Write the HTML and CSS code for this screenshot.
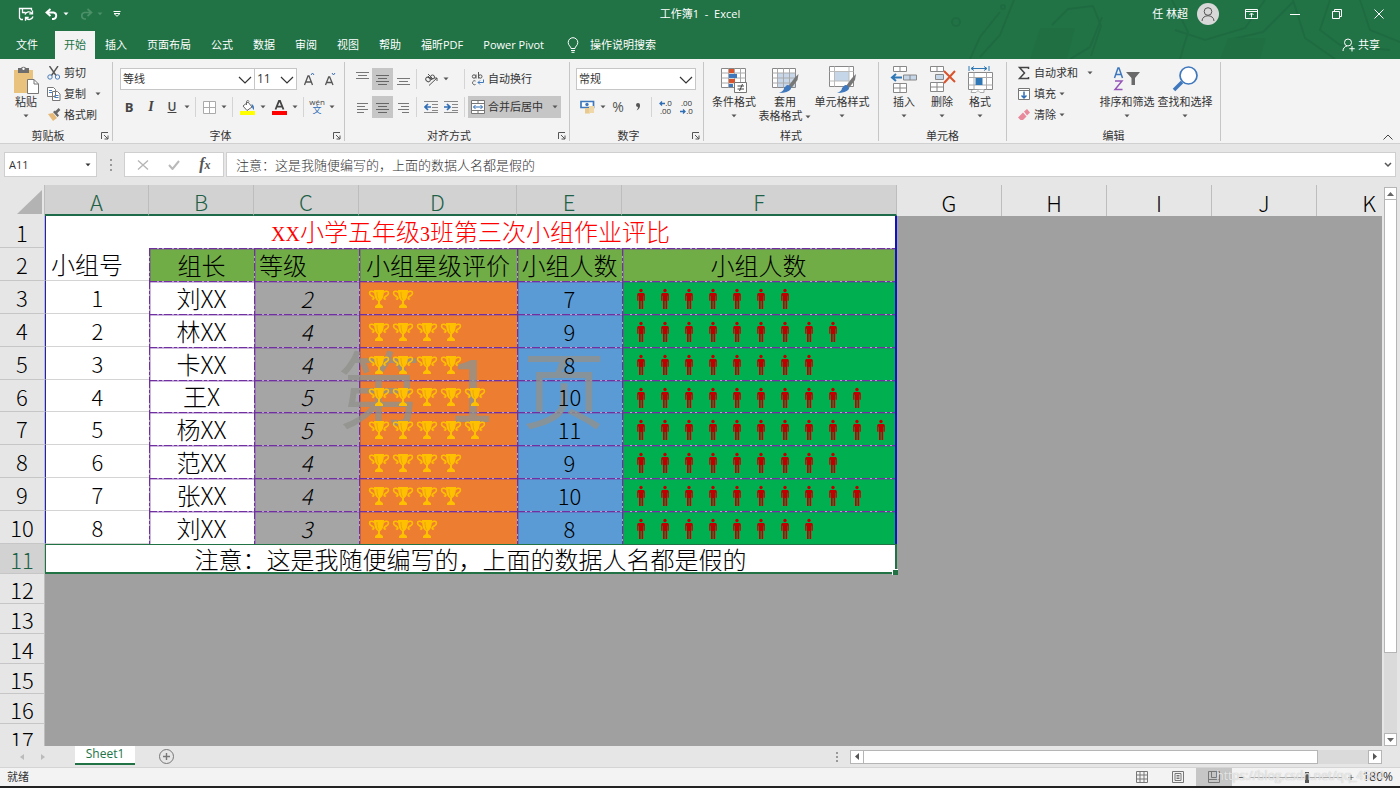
FILE: index.html
```html
<!DOCTYPE html>
<html lang="zh-CN">
<head>
<meta charset="utf-8">
<title>工作簿1 - Excel</title>
<link rel="stylesheet" href="styles.css">
</head>
<body>
<svg class="defs" aria-hidden="true">
  <defs>
    <pattern id="trophies" width="24" height="20" patternUnits="userSpaceOnUse">
      <g fill="#ffc000">
        <path d="M7 1h10c0 6-1.500 10-4 11v2.500c0 1 2.500 1.500 3 3V19H8v-1.500c.5-1.500 3-2 3-3V12c-2.500-1-4-5-4-11z"/>
        <path d="M7.500 3.500C5 1.500 2.500 2 2.500 4.200c0 2.300 3.200 2.800 4.200 4.300.7 1.500-1 2-1.500 1M16.500 3.500c2.500-2 5-1.500 5 .7 0 2.300-3.200 2.800-4.200 4.300-.7 1.500 1 2 1.500 1" fill="none" stroke="#ffc000" stroke-width="1.600"/>
      </g>
      <path d="M10 3c0 4 .5 6 1.500 8" fill="none" stroke="#e39a10" stroke-width=".8"/>
    </pattern>
    <pattern id="people" width="24" height="22" patternUnits="userSpaceOnUse">
      <g fill="#c00000">
        <circle cx="12" cy="2.500" r="1.700"/>
        <path d="M9.500 5h5q1.300 0 1.300 1.500v6.300h-1.200v-5h-.4V21h-1.700v-8h-.8v8H10V7.800h-.5v5H8.200V6.500Q8.200 5 9.500 5z"/>
      </g>
    </pattern>
    <symbol id="arrow" viewBox="0 0 6 4"><path d="M.5.5h5L3 3.300z" fill="currentColor"/></symbol>
    <symbol id="chevron" viewBox="0 0 14 8"><path d="M1 1l6 6 6-6" fill="none" stroke="#333" stroke-width="1.200"/></symbol>
    <symbol id="launch" viewBox="0 0 8 8"><path d="M.5 7V.5H7M3 3l4 4M7 3.500V7H3.500" fill="none" stroke="#555"/></symbol>
  </defs>
</svg>
<div class="app">
  <header class="top">
    <svg class="circuit" viewBox="0 0 460 59" aria-hidden="true">
      <g fill="none" stroke="#1a5f39" stroke-width="2">
        <path d="M30 59l10-22 20-25M74 0l-14 35-20 22M112 25l16-16 25-3 8 20-10 30M130 59l20-12 12-30M232 0l16 32-8 27M235 30l30 10 40-12 20-28M288 40l35-8 30-30M353 0l12 38 30 21M390 0l-10 30 20 15 50 5M420 0l10 30 30 12"/>
        <circle cx="16" cy="22" r="4"/><circle cx="63" cy="7" r="2"/>
      </g>
      <path d="M100 28h35l-8 31H90zM288 38h38l-6 21h-40z" fill="#1e6a40"/>
    </svg>
    <div class="titlebar">
      <div class="qat">
        <button class="q-save" aria-label="保存"><svg width="16" height="14" viewBox="0 0 16 14" fill="none" stroke="#fff" stroke-width="1.300"><path d="M5 12.500H3L1.500 11V1.500h12v2M4.500 1.500v4h3M7 7.500a4 4 0 0 1 7-1M14.500 3.500v3.300h-3.300M15 9.500a4 4 0 0 1-7 1.500M7.500 13.800v-3.300h3.200"/></svg></button>
        <button class="q-undo" aria-label="撤消"><svg width="14" height="12" viewBox="0 0 14 12" fill="none" stroke="#fff" stroke-width="1.900"><path d="M5.500 1L1.500 4.500l4 3.500M2 4.500h6.500a3.300 3.300 0 0 1 0 6.500H7"/></svg></button>
        <svg class="arr" width="6" height="4"><use href="#arrow"/></svg>
        <button class="q-redo" aria-label="恢复"><svg width="14" height="12" viewBox="0 0 14 12" fill="none" stroke="#4b9068" stroke-width="1.700"><path d="M8.500 1l4 3.500-4 3.500M12 4.500H5.500a3.300 3.300 0 0 0 0 6.500H7"/></svg></button>
        <svg class="arr dim" width="6" height="4"><use href="#arrow"/></svg>
        <button class="q-more" aria-label="自定义"><svg width="8" height="6" viewBox="0 0 8 6" fill="none" stroke="#fff"><path d="M.5.500h7M1 2.500h6L4 5.300z"/></svg></button>
      </div>
      <div class="doc-title">工作簿1&nbsp; -&nbsp; Excel</div>
      <div class="win">
        <span>任 林超</span>
        <svg class="avatar" width="22" height="22" viewBox="0 0 22 22"><circle cx="11" cy="11" r="11" fill="#d8d8d8"/><g fill="none" stroke="#555"><circle cx="11" cy="8.500" r="3.800"/><path d="M5 18c0-7 12-7 12 0"/></g></svg>
        <button aria-label="功能区显示选项"><svg width="13" height="10" viewBox="0 0 13 10" fill="none" stroke="#fff"><path d="M.5.500h12v9H.5zM.5 2.500h12M6.500 8.500V4.500M4.500 6l2-2 2 2"/></svg></button>
        <button aria-label="最小化"><svg width="10" height="10" viewBox="0 0 10 10" stroke="#fff"><path d="M0 5.500h10"/></svg></button>
        <button aria-label="还原"><svg width="10" height="10" viewBox="0 0 10 10" fill="none" stroke="#fff"><path d="M.5 2.500h7v7h-7zM2.500 2V.5h7v7H8"/></svg></button>
        <button aria-label="关闭"><svg width="10" height="10" viewBox="0 0 10 10" stroke="#fff"><path d="M.5.500l9 9M9.500.5l-9 9"/></svg></button>
      </div>
    </div>
    <nav class="tabs">
      <button class="file">文件</button><button class="active">开始</button><button>插入</button><button>页面布局</button><button>公式</button><button>数据</button><button>审阅</button><button>视图</button><button>帮助</button><button>福昕PDF</button><button>Power Pivot</button>
      <button class="tell"><svg width="12" height="16" viewBox="0 0 12 16" fill="none" stroke="#fff"><path d="M4 11.500c0-2-2.800-3-2.800-6a4.800 4.800 0 0 1 9.600 0c0 3-2.800 4-2.800 6zM4 13.500h4M4.500 15.300h3"/></svg>操作说明搜索</button>
      <button class="share"><svg width="13" height="14" viewBox="0 0 13 14" fill="none" stroke="#fff"><circle cx="6" cy="4.500" r="3.500"/><path d="M1 13c0-2.500 1.500-4.500 4-5M10 8v5.500M7.300 10.700h5.400"/></svg>共享</button>
    </nav>
  </header>

  <section class="ribbon">
    <div class="group g-clip">
      <div class="body">
        <button class="big"><svg width="26" height="28" viewBox="0 0 26 28"><path d="M1 4h19v23H1z" fill="#e9c37d"/><path d="M5 2h3a3 3 0 0 1 5 0h3v5H5z" fill="#6d6d6d"/><circle cx="10.500" cy="2.800" r="1.200" fill="#fff"/><path d="M14.500 13.500h6.500l4.500 4.500v9.500h-11z" fill="#fff" stroke="#777"/><path d="M21 13.500V18h4.500" fill="none" stroke="#777"/></svg><span>粘贴</span><svg class="arr" width="6" height="4"><use href="#arrow"/></svg></button>
        <div class="stack">
          <button><svg width="14" height="14" viewBox="0 0 14 14" fill="none"><path d="M2.500 0L9 9.500M11 0L4.500 9.500" stroke="#555" stroke-width="1.400"/><circle cx="3" cy="11" r="2.200" stroke="#4a7ebb"/><circle cx="10.500" cy="11" r="2.200" stroke="#4a7ebb"/></svg>剪切</button>
          <button><svg width="14" height="14" viewBox="0 0 14 14" fill="#fff" stroke="#777"><path d="M.5.500h6l2 2v7h-8zM5.500 4.500h5l2.500 2.500v6.500H5.500z"/><path d="M2 3.500h3M2 5.500h3M7.500 8.500h4M7.500 10.500h4" stroke="#4a7ebb"/></svg>复制<svg class="arr far" width="6" height="4"><use href="#arrow"/></svg></button>
          <button><svg width="14" height="14" viewBox="0 0 14 14"><path d="M1 6l5-1 4 5-4 3z" fill="#e5b978"/><path d="M6 4l2-1.500 4 5L10.500 9z" fill="#666"/><path d="M9 4.500L12.500 1" stroke="#666" stroke-width="2.500"/></svg>格式刷</button>
        </div>
      </div>
      <div class="label">剪贴板<button aria-label="剪贴板选项"><svg width="8" height="8"><use href="#launch"/></svg></button></div>
    </div>

    <div class="group g-font">
      <div class="body rows">
        <div class="row">
          <label class="combo c-font"><select aria-label="字体"><option>等线</option></select><svg width="14" height="8"><use href="#chevron"/></svg></label><label class="combo c-size"><select aria-label="字号"><option>11</option></select><svg width="14" height="8"><use href="#chevron"/></svg></label>
          <button class="w22 grow" aria-label="增大字号"><svg width="14" height="14" viewBox="0 0 14 14" fill="none"><path d="M1.500 13L5 4h1l3.500 9M2.800 10h5.400" stroke="#555" stroke-width="1.300"/><path d="M8 3l1.500-2L11 3" stroke="#3f6fb5"/></svg></button>
          <button class="w20" aria-label="减小字号"><svg width="14" height="14" viewBox="0 0 14 14" fill="none"><path d="M1.500 13L4.700 5h1L9 13M2.800 10.500h5" stroke="#555" stroke-width="1.300"/><path d="M8 1l1.500 2L11 1" stroke="#3f6fb5"/></svg></button>
        </div>
        <div class="row fmt">
          <button class="w22"><b>B</b></button><button class="w22"><i>I</i></button><button class="w20"><u>U</u></button><svg class="arr" width="6" height="4"><use href="#arrow"/></svg><span class="vs"></span>
          <button class="w20" aria-label="边框"><svg width="13" height="13" viewBox="0 0 13 13" fill="#fff" stroke="#aaa"><path d="M.5.500h12v12H.5zM6.500.500v12M.5 6.500h12"/></svg></button><svg class="arr" width="6" height="4"><use href="#arrow"/></svg><span class="vs"></span>
          <button class="w22" aria-label="填充颜色"><svg width="15" height="15" viewBox="0 0 15 15"><path d="M0 11h15v4H0z" fill="#ff0"/><path d="M3 6l5-4 4 5-5 3.500z" fill="#fff" stroke="#666"/><path d="M6.500 5V1.500a1.300 1.300 0 0 1 2.500 0" fill="none" stroke="#666"/><path d="M11.500 4q3 1 2.500 6-2-1-2.500-6z" fill="#3f78bd"/></svg></button><svg class="arr" width="6" height="4"><use href="#arrow"/></svg>
          <button class="w22" aria-label="字体颜色"><svg width="15" height="15" viewBox="0 0 15 15"><path d="M0 11h15v4H0z" fill="red"/><path d="M3.500 9.500L7 1h1l3.500 8.500M4.800 6.700h5.400" fill="none" stroke="#444" stroke-width="1.800"/></svg></button><svg class="arr" width="6" height="4"><use href="#arrow"/></svg><span class="vs"></span>
          <button class="w20 pinyin"><span>wén</span><span class="blue">文</span></button><svg class="arr" width="6" height="4"><use href="#arrow"/></svg>
        </div>
      </div>
      <div class="label">字体<button aria-label="字体选项"><svg width="8" height="8"><use href="#launch"/></svg></button></div>
    </div>

    <div class="group g-align">
      <div class="body rows">
        <div class="row">
          <button class="w20 hi" aria-label="顶端对齐"><svg width="13" height="8" viewBox="0 0 13 8" stroke="#777"><path d="M0 .500h13M2 3.500h9M0 6.500h13"/></svg></button><button class="w21 on" aria-label="垂直居中"><svg width="13" height="11" viewBox="0 0 13 11" stroke="#666"><path d="M0 1.500h13M2 4.500h9M0 7.500h13M2 10.500h9"/></svg></button><button class="w20 lo" aria-label="底端对齐"><svg width="13" height="10" viewBox="0 0 13 10" stroke="#777"><path d="M0 2.500h13M2 5.500h9M0 8.500h13"/></svg></button><span class="vs"></span>
          <button class="w21" aria-label="方向"><svg width="14" height="14" viewBox="0 0 14 14" fill="none" stroke="#555"><ellipse cx="4" cy="7.500" rx="2" ry="2.500" transform="rotate(-45 4 7.500)"/><path d="M4 4l4 4M4 2l5 5"/><circle cx="8.500" cy="5" r="2"/><path d="M5 13.500L13 6M13 9V6h-3"/></svg></button><svg class="arr" width="6" height="4"><use href="#arrow"/></svg><span class="gap10"></span><span class="vs"></span>
          <button class="wide"><svg width="14" height="14" viewBox="0 0 14 14" fill="none" stroke="#555"><circle cx="3" cy="4.500" r="1.700"/><path d="M5 2.500v4M7.500 0v6.500M4.500 9a2 2 0 1 0 0 3.500"/><circle cx="9.300" cy="4.500" r="1.700"/><path d="M12.500 7.500v3H7M9 8.500l-2 2 2 2" stroke="#3f78bd"/></svg>自动换行</button>
        </div>
        <div class="row">
          <button class="w20" aria-label="左对齐"><svg width="11" height="11" viewBox="0 0 11 11" stroke="#777"><path d="M0 1.500h11M0 4.500h8M0 7.500h11M0 10.500h7"/></svg></button><button class="w21 on" aria-label="居中"><svg width="13" height="11" viewBox="0 0 13 11" stroke="#666"><path d="M0 1.500h13M2 4.500h9M0 7.500h13M2 10.500h9"/></svg></button><button class="w20" aria-label="右对齐"><svg width="11" height="11" viewBox="0 0 11 11" stroke="#777"><path d="M0 1.500h11M3 4.500h8M0 7.500h11M4 10.500h7"/></svg></button><span class="vs"></span>
          <button class="w21" aria-label="减少缩进"><svg width="14" height="12" viewBox="0 0 14 12" fill="none" stroke="#888"><path d="M0 .500h14M8 3.500h6M8 6.500h6M8 9.500h6M0 11.500h14"/><path d="M7 6H1M4 3L1 6l3 3" stroke="#2f6db5" stroke-width="1.700"/></svg></button><button class="w20" aria-label="增加缩进"><svg width="14" height="12" viewBox="0 0 14 12" fill="none" stroke="#888"><path d="M0 .500h14M8 3.500h6M8 6.500h6M8 9.500h6M0 11.500h14"/><path d="M0 6h6M3 3l3 3-3 3" stroke="#2f6db5" stroke-width="1.700"/></svg></button><span class="vs"></span>
          <button class="wide on merge"><svg width="14" height="14" viewBox="0 0 14 14" fill="#fff" stroke="#777"><path d="M.5.500h13v13H.5zM.5 3.500h13M.5 10.500h13M7 .500v3M7 10.500v3"/><path d="M2.500 7h9M4.500 5l-2 2 2 2M9.500 5l2 2-2 2" fill="none" stroke="#2f6db5"/></svg>合并后居中<svg class="arr far" width="6" height="4"><use href="#arrow"/></svg></button>
        </div>
      </div>
      <div class="label">对齐方式<button aria-label="对齐选项"><svg width="8" height="8"><use href="#launch"/></svg></button></div>
    </div>

    <div class="group g-num">
      <div class="body rows">
        <div class="row"><label class="combo c-num"><select aria-label="数字格式"><option>常规</option></select><svg width="14" height="8"><use href="#chevron"/></svg></label></div>
        <div class="row">
          <button class="w22" aria-label="会计数字格式"><svg width="15" height="14" viewBox="0 0 15 14"><path d="M1 1.500h12.500v6H1z" fill="#fff" stroke="#3f78bd" stroke-width="1.700"/><circle cx="7" cy="4.500" r="1.700" fill="#3f78bd"/><path d="M5 8h5v5.500H5z" fill="#e9c98d"/><path d="M9 6h5v7H9z" fill="#f0d7a8"/></svg></button><svg class="arr" width="6" height="4"><use href="#arrow"/></svg>
          <button class="w20 pct">%</button><button class="w20" aria-label="千位分隔样式"><svg width="6" height="8" viewBox="0 0 6 8"><path d="M1 2a2 2 0 0 1 4 0q.3 3.500-3.500 5.500Q3 5.500 3 4 1 4 1 2z" fill="#555"/></svg></button><span class="vs"></span>
          <button class="w21 dec"><span><svg width="6" height="5" viewBox="0 0 6 5" fill="none" stroke="#2f6db5" stroke-width="1.300"><path d="M6 2.500H1M3 .5l-2 2 2 2"/></svg>.0</span><span>.00</span></button><button class="w21 dec"><span>.00</span><span><svg width="6" height="5" viewBox="0 0 6 5" fill="none" stroke="#2f6db5" stroke-width="1.300"><path d="M0 2.500h5M3 .5l2 2-2 2"/></svg>.0</span></button>
        </div>
      </div>
      <div class="label">数字<button aria-label="数字选项"><svg width="8" height="8"><use href="#launch"/></svg></button></div>
    </div>

    <div class="group g-style">
      <div class="body">
        <button class="big w50"><svg width="28" height="28" viewBox="0 0 28 28"><path d="M1.500 2.500h24v19h-24z" fill="#fff" stroke="#888"/><path d="M1.500 7h24M1.500 12h24M1.500 17h24M8.500 2.500v19M20.500 2.500v19M14.500 2.500v19" stroke="#aaa"/><path d="M9 3h5v4H9zM9 13h6v4H9z" fill="#d9532c"/><path d="M9 8h8v4H9zM9 18h4v3H9z" fill="#3f78bd"/><path d="M14.500 16.500h12v10h-12z" fill="#fff" stroke="#777"/><path d="M17.500 20h6.500M17.500 23h6.500M22.500 18l-3 7" stroke="#444"/></svg><span>条件格式</span><svg class="arr" width="6" height="4"><use href="#arrow"/></svg></button>
        <button class="big w52"><svg width="28" height="28" viewBox="0 0 28 28"><path d="M1.500 2.500h23v19h-23z" fill="#fff" stroke="#888"/><path d="M7 7h17v14H7z" fill="#c8d8ea"/><path d="M1.500 7h23M1.500 12h23M1.500 17h23M6.500 2.500v19M12.500 2.500v19M18.500 2.500v19" stroke="#aaa"/><path d="M27.500 8l-1 6-6 8-3-2 6-8z" fill="#777"/><path d="M16 19q4 0 4 4-3 4-12 4 5-2 5-5z" fill="#3f78bd"/></svg><span>套用</span><span>表格格式 <svg class="arr" width="6" height="4"><use href="#arrow"/></svg></span></button>
        <button class="big w62"><svg width="28" height="28" viewBox="0 0 28 28"><path d="M1.500.500h24v20h-24z" fill="#fff" stroke="#888"/><path d="M7 6h14v9H7z" fill="#c5d6e8"/><path d="M1.500 5.500h24M1.500 15h24M6.500.500v20M21 .500v20" stroke="#bbb"/><path d="M28 8l-1 6-6 8-3-2 6-8z" fill="#777"/><path d="M17 19q4 0 4 4-3 4-12 4 5-2 5-5z" fill="#3f78bd"/></svg><span>单元格样式</span><svg class="arr" width="6" height="4"><use href="#arrow"/></svg></button>
      </div>
      <div class="label plain">样式</div>
    </div>

    <div class="group g-cell">
      <div class="body">
        <button class="big w38"><svg width="28" height="28" viewBox="0 0 28 28" fill="#fff" stroke="#888"><path d="M3.500.500h13v5h-13zM10 .500v5M3.500 17.500h13v9h-13zM10 17.500v9M3.500 22h13"/><path d="M13.500 9h13v5h-13zM20 9v5" fill="#c5d6e8"/><path d="M12 11.500H2M6 8l-4 3.500L6 15" fill="none" stroke="#2f78b5" stroke-width="2"/></svg><span>插入</span><svg class="arr" width="6" height="4"><use href="#arrow"/></svg></button>
        <button class="big w38"><svg width="28" height="28" viewBox="0 0 28 28" fill="#fff" stroke="#888"><path d="M2.500.500h13v5h-13zM9 .500v5M2.500 16.500h13v9h-13zM9 16.500v9M2.500 21h13"/><path d="M7.500 8.500h8v5h-8z" fill="#c5d6e8"/><path d="M16 5l11 11M27 5L16 17" stroke="#d9532c" stroke-width="2"/></svg><span>删除</span><svg class="arr" width="6" height="4"><use href="#arrow"/></svg></button>
        <button class="big w38"><svg width="28" height="28" viewBox="0 0 28 28" fill="#fff" stroke="#888"><path d="M2.500 6.500h24v17h-24z"/><path d="M8 6.500v17M20.500 6.500v17M2.500 11.500h24M2.500 19h24M6 24l-1 2.500h5l2-2 2 2h4v-3" stroke="#aaa"/><path d="M9.500 12h7v7h-7z" fill="#2f78b5" stroke="none"/><path d="M3 0v5M23 0v5M5 2.500h16M8 .500l-3 2 3 2M18 .500l3 2-3 2" fill="none" stroke="#2f78b5"/></svg><span>格式</span><svg class="arr" width="6" height="4"><use href="#arrow"/></svg></button>
      </div>
      <div class="label plain">单元格</div>
    </div>

    <div class="group g-edit">
      <div class="body">
        <div class="stack">
          <button><svg width="14" height="14" viewBox="0 0 14 14" fill="none" stroke="#444" stroke-width="1.500"><path d="M11.500 3V1.500H2.500L7.500 7l-5 5.500h9V11"/></svg>自动求和<svg class="arr far" width="6" height="4"><use href="#arrow"/></svg></button>
          <button><svg width="14" height="14" viewBox="0 0 14 14" fill="#fff" stroke="#777"><path d="M1.500 1.500h11v11h-11zM1.500 3.500h11"/><path d="M7 4.500V11M4.500 8.500L7 11l2.500-2.500" fill="none" stroke="#2f6db5" stroke-width="1.500"/></svg>填充<svg class="arr" width="6" height="4"><use href="#arrow"/></svg></button>
          <button><svg width="14" height="14" viewBox="0 0 14 14"><path d="M7 3.500L10 1l3 3.500-3 3z" fill="#e8899c"/><path d="M6 4.500l3.500 4L6 12H3.500L1 9.500z" fill="#e8899c"/></svg>清除<svg class="arr" width="6" height="4"><use href="#arrow"/></svg></button>
        </div>
        <button class="big w58"><svg width="28" height="28" viewBox="0 0 28 28" fill="none"><path d="M1.500 12L5 2h1l3.500 10M2.800 8.500h5.400" stroke="#3f78bd" stroke-width="1.500"/><path d="M2 15h7L2 23.500h7.500" stroke="#9556b8" stroke-width="1.500"/><path d="M13 6h14l-5 6v7h-3.500v-7z" fill="#6a6a6a"/></svg><span>排序和筛选</span><svg class="arr" width="6" height="4"><use href="#arrow"/></svg></button>
        <button class="big w58"><svg width="28" height="28" viewBox="0 0 28 28" fill="none" stroke="#3f78bd"><circle cx="17.500" cy="9.500" r="8.500" fill="#fff" stroke-width="1.700"/><path d="M11 16l-8 8" stroke-width="3.500"/></svg><span>查找和选择</span><svg class="arr" width="6" height="4"><use href="#arrow"/></svg></button>
      </div>
      <div class="label plain">编辑</div>
    </div>
    <button class="collapse" aria-label="折叠功能区"><svg width="10" height="6" viewBox="0 0 10 6" fill="none" stroke="#444"><path d="M.5 5.500L5 1l4.500 4.500"/></svg></button>
  </section>

  <section class="formula">
    <label class="namebox"><input value="A11" aria-label="名称框"><svg width="6" height="4"><use href="#arrow"/></svg></label>
    <svg class="dots" width="2" height="12" viewBox="0 0 2 12" fill="#999"><path d="M0 0h2v2H0zM0 5h2v2H0zM0 10h2v2H0z"/></svg>
    <div class="fx">
      <button aria-label="取消"><svg width="12" height="10" viewBox="0 0 12 10" stroke="#b5b5b5" stroke-width="1.300"><path d="M1 .500l10 9M11 .500l-10 9"/></svg></button>
      <button aria-label="输入"><svg width="12" height="10" viewBox="0 0 12 10" fill="none" stroke="#b9b9b9" stroke-width="2"><path d="M1 5l3.500 4L11 1"/></svg></button>
      <button><i>f<small>x</small></i></button>
    </div>
    <label class="finput"><input value="注意：这是我随便编写的，上面的数据人名都是假的" aria-label="编辑栏"><svg width="8" height="6" viewBox="0 0 8 6" fill="none" stroke="#555" stroke-width="1.500"><path d="M1 1l3 3 3-3"/></svg></label>
  </section>

  <main class="sheet">
    <div class="viewport">
      <table class="grid">
        <colgroup><col class="c-head"><col class="c-a"><col class="c-std"><col class="c-std"><col class="c-d"><col class="c-std"><col class="c-f"><col class="c-std"><col class="c-std"><col class="c-std"><col class="c-std"><col class="c-std"></colgroup>
        <thead><tr><th class="corner"><svg width="25" height="24" viewBox="0 0 25 24"><path d="M25 0v24H0z" fill="#b3b3b3"/></svg></th><th class="sel">A</th><th class="sel">B</th><th class="sel">C</th><th class="sel">D</th><th class="sel">E</th><th class="sel">F</th><th>G</th><th>H</th><th>I</th><th>J</th><th>K</th></tr></thead>
        <tbody>
          <tr class="short"><th>1</th><td colspan="6" class="title"><span><small>XX</small>小学五年级<small>3</small>班第三次小组作业评比</span></td><td colspan="5" rowspan="17" class="void"></td></tr>
          <tr class="heads"><th>2</th><td class="a left">小组号</td><td class="d">组长</td><td class="d left">等级</td><td class="d">小组星级评价</td><td class="d">小组人数</td><td class="d last">小组人数</td></tr>
          <tr><th>3</th><td class="a">1</td><td class="d">刘XX</td><td class="d lv">2</td><td class="d star"><svg width="48" height="20"><rect width="100%" height="100%" fill="url(#trophies)"/></svg></td><td class="d num"><span>7</span></td><td class="d ppl last"><svg width="168" height="22"><rect width="100%" height="100%" fill="url(#people)"/></svg></td></tr>
          <tr><th>4</th><td class="a">2</td><td class="d">林XX</td><td class="d lv">4</td><td class="d star"><svg width="96" height="20"><rect width="100%" height="100%" fill="url(#trophies)"/></svg></td><td class="d num"><span>9</span></td><td class="d ppl last"><svg width="216" height="22"><rect width="100%" height="100%" fill="url(#people)"/></svg></td></tr>
          <tr><th>5</th><td class="a">3</td><td class="d">卡XX</td><td class="d lv">4</td><td class="d star"><svg width="96" height="20"><rect width="100%" height="100%" fill="url(#trophies)"/></svg></td><td class="d num"><span>8</span></td><td class="d ppl last"><svg width="192" height="22"><rect width="100%" height="100%" fill="url(#people)"/></svg></td></tr>
          <tr class="short"><th>6</th><td class="a">4</td><td class="d">王X</td><td class="d lv">5</td><td class="d star"><svg width="120" height="20"><rect width="100%" height="100%" fill="url(#trophies)"/></svg></td><td class="d num"><span>10</span></td><td class="d ppl last"><svg width="240" height="22"><rect width="100%" height="100%" fill="url(#people)"/></svg></td></tr>
          <tr><th>7</th><td class="a">5</td><td class="d">杨XX</td><td class="d lv">5</td><td class="d star"><svg width="120" height="20"><rect width="100%" height="100%" fill="url(#trophies)"/></svg></td><td class="d num"><span>11</span></td><td class="d ppl last"><svg width="264" height="22"><rect width="100%" height="100%" fill="url(#people)"/></svg></td></tr>
          <tr><th>8</th><td class="a">6</td><td class="d">范XX</td><td class="d lv">4</td><td class="d star"><svg width="96" height="20"><rect width="100%" height="100%" fill="url(#trophies)"/></svg></td><td class="d num"><span>9</span></td><td class="d ppl last"><svg width="216" height="22"><rect width="100%" height="100%" fill="url(#people)"/></svg></td></tr>
          <tr><th>9</th><td class="a">7</td><td class="d">张XX</td><td class="d lv">4</td><td class="d star"><svg width="96" height="20"><rect width="100%" height="100%" fill="url(#trophies)"/></svg></td><td class="d num"><span>10</span></td><td class="d ppl last"><svg width="240" height="22"><rect width="100%" height="100%" fill="url(#people)"/></svg></td></tr>
          <tr><th>10</th><td class="a">8</td><td class="d">刘XX</td><td class="d lv">3</td><td class="d star"><svg width="72" height="20"><rect width="100%" height="100%" fill="url(#trophies)"/></svg></td><td class="d num"><span>8</span></td><td class="d ppl last"><svg width="192" height="22"><rect width="100%" height="100%" fill="url(#people)"/></svg></td></tr>
          <tr class="low"><th class="sel">11</th><td colspan="6" class="note">注意：这是我随便编写的，上面的数据人名都是假的</td></tr>
          <tr class="low"><th>12</th><td colspan="6" class="void"></td></tr>
          <tr class="low"><th>13</th><td colspan="6" class="void"></td></tr>
          <tr class="low"><th>14</th><td colspan="6" class="void"></td></tr>
          <tr class="low"><th>15</th><td colspan="6" class="void"></td></tr>
          <tr class="low"><th>16</th><td colspan="6" class="void"></td></tr>
          <tr class="low"><th>17</th><td colspan="6" class="void"></td></tr>
        </tbody>
      </table>
      <div class="page-mark"><span>第</span><span>1</span><span>页</span></div>
    </div>
    <div class="vscroll">
      <button aria-label="向上"><svg width="7" height="4" viewBox="0 0 7 4"><path d="M0 4h7L3.500 0z" fill="#666"/></svg></button>
      <div class="thumb"></div><div class="track"></div>
      <button aria-label="向下"><svg width="7" height="4" viewBox="0 0 7 4"><path d="M0 0h7L3.500 4z" fill="#666"/></svg></button>
    </div>
  </main>

  <section class="sheetbar">
    <div class="navs"><svg width="4" height="6" viewBox="0 0 4 6"><path d="M4 0v6L0 3z" fill="#bbb"/></svg><svg width="4" height="6" viewBox="0 0 4 6"><path d="M0 0v6l4-3z" fill="#bbb"/></svg></div>
    <button class="stab">Sheet1</button>
    <button class="add" aria-label="新工作表"><svg width="15" height="15" viewBox="0 0 15 15" fill="none" stroke="#777"><circle cx="7.500" cy="7.500" r="7"/><path d="M7.500 4v7M4 7.500h7" stroke-width="1.400"/></svg></button>
    <svg class="dots" width="2" height="10" viewBox="0 0 2 10" fill="#999"><path d="M0 0h2v2H0zM0 4h2v2H0zM0 8h2v2H0z"/></svg>
    <div class="hscroll">
      <button aria-label="向左"><svg width="4" height="7" viewBox="0 0 4 7"><path d="M4 0v7L0 3.500z" fill="#555"/></svg></button>
      <div class="thumb"></div><div class="track"></div>
      <button aria-label="向右"><svg width="4" height="7" viewBox="0 0 4 7"><path d="M0 0v7l4-3.500z" fill="#555"/></svg></button>
    </div>
  </section>

  <footer class="status">
    <span>就绪</span>
    <div class="views">
      <button aria-label="普通"><svg width="12" height="12" viewBox="0 0 12 12" fill="none" stroke="#777"><path d="M.5.500h11v11H.5zM4 .500v11M8 .500v11M.5 4h11M.5 8h11"/></svg></button>
      <button aria-label="页面布局"><svg width="12" height="12" viewBox="0 0 12 12" fill="none" stroke="#777"><path d="M.5.500h11v11H.5zM3 2.500h6v7H3zM4.500 4.500h3M4.500 6h3M4.500 7.500h3"/></svg></button>
      <button class="on" aria-label="分页预览"><svg width="12" height="12" viewBox="0 0 12 12" fill="none" stroke="#777"><path d="M.5.500h11v11H.5zM3.500.500v6h5v-6M.5 8.500h11"/></svg></button>
    </div>
    <div class="zoom"><button>−</button><input type="range" min="0" max="100" value="62" aria-label="缩放"><button>+</button><span class="pc">180%</span></div>
    <div class="source">https://blog.csdn.net/qq_4504</div>
  </footer>
</div>
</body>
</html>
```
FILE: styles.css
```css
* { box-sizing: border-box; }
body {
  margin: 0;
  font: 11px/14px "Open Sans", "Noto Sans CJK SC", sans-serif;
  color: #333;
}
button { padding: 0; border: 0; background: none; font: inherit; color: inherit; display: flex; align-items: center; justify-content: center; white-space: nowrap; }
select, input { font: inherit; color: inherit; min-width: 0; }
svg { flex: none; }
.defs { position: absolute; width: 0; height: 0; }
.app { display: flex; flex-direction: column; height: 100vh; overflow: hidden; background: #e6e6e6; }

/* title bar and tabs */
.top { position: relative; background: #217346; color: #fff; }
.circuit { position: absolute; right: 0; top: 0; width: 460px; height: 59px; opacity: .35; }
.titlebar { position: relative; display: grid; grid-template-columns: 1fr auto 1fr; align-items: center; height: 28px; }
.qat { display: flex; align-items: center; padding-left: 18px; }
.q-undo { margin-left: 11px; }
.q-redo { margin-left: 10px; }
.q-more { margin-left: 10px; }
.qat .arr { margin-left: 4px; }
.win { display: flex; align-items: center; justify-content: flex-end; padding-right: 16px; }
.avatar { margin-left: 9px; }
.win button { margin-left: 32px; }
.win .avatar + button { margin-left: 35px; }
.win { padding-right: 16px; }
.win .avatar + button { margin-left: 26px; }
.tabs { position: relative; display: flex; height: 31px; padding-top: 3px; }
.tabs button { padding: 0 10px; }
.tabs .file { padding: 0 17px 0 16px; }
.tabs .active { padding: 0 9px; background: #f3f3f3; color: #217346; }
.tabs .tell { gap: 11px; padding-left: 13px; }
.tabs .share { margin-left: auto; gap: 3px; padding-right: 20px; }

/* ribbon */
.ribbon { position: relative; display: flex; height: 85px; padding-top: 3px; background: #f3f3f3; border-bottom: 1px solid #d0d0d0; }
.group { display: flex; flex-direction: column; height: 79px; border-right: 1px solid #c6c6c6; }
.body { display: flex; height: 66px; }
.rows { flex-direction: column; gap: 6px; padding-top: 6px; }
.row { display: flex; align-items: center; height: 22px; }
.label { position: relative; height: 13px; line-height: 16px; text-align: center; padding-right: 16px; }
.label.plain { padding-right: 0; }
.label button { position: absolute; right: 3px; top: 4px; }
.g-clip { width: 113px; }
.g-font { width: 232px; }
.g-align { width: 225px; }
.g-num { width: 134px; }
.g-style { width: 175px; }
.g-cell { width: 128px; }
.g-edit { width: 214px; }
.g-clip .body { padding-left: 5px; }
.g-font .body { padding-left: 7px; }
.g-align .body { padding-left: 7px; }
.g-num .body { padding-left: 6px; }
.g-style .body { padding-left: 5px; }
.g-cell .body { padding-left: 6px; }
.g-edit .body { padding-left: 10px; }
.big { flex-direction: column; justify-content: flex-start; width: 42px; padding-top: 4px; }
.big > svg:first-child { margin-bottom: 1px; }
.big > .arr { margin-top: 5px; }
.big > span { line-height: 14px; }
.big span .arr { width: 6px; vertical-align: middle; }
.stack { display: flex; flex-direction: column; }
.stack button { height: 21px; gap: 3px; justify-content: flex-start; }
.stack .arr { width: 6px; }
.stack .far { margin-left: 6px; }
.g-edit .stack { width: 81px; }
.arr { color: #555; }
.qat .arr { color: #fff; }
.qat .dim { color: #4b9068; }
.row > .arr { margin: 0 2px; }
.w20 { width: 20px; height: 22px; }
.w21 { width: 21px; height: 22px; }
.w22 { width: 22px; height: 22px; }
.w38 { width: 38px; }
.w50 { width: 50px; }
.w52 { width: 52px; }
.w62 { width: 62px; }
.w58 { width: 58px; }
.on { background: #c6c6c6; }
.hi { align-items: flex-start; padding-top: 4px; }
.lo { align-items: flex-end; padding-bottom: 4px; }
.vs { width: 1px; height: 20px; margin: 0 3px; background: #d4d4d4; }
.gap10 { width: 10px; }
.fmt { font-size: 13px; color: #444; }
.g-font .fmt { margin-left: -2px; }
.fmt i { font-family: "Liberation Serif", serif; font-size: 14px; font-weight: bold; }
.fmt u { font-weight: 600; font-size: 12px; }
.pinyin { flex-direction: column; font-size: 8px; line-height: 6px; }
.blue { color: #2f6db5; font-size: 9px; line-height: 10px; }
.wide { gap: 3px; padding: 0 3px; height: 22px; }
.merge .far { margin-left: 6px; }
.pct { font-size: 14px; color: #555; }
.dec { flex-direction: column; font-size: 8px; line-height: 8px; color: #333; }
.combo { position: relative; display: flex; height: 22px; background: #fff; border: 1px solid #c6c6c6; }
.combo select { appearance: none; border: 0; background: none; width: 100%; padding: 0 2px; }
.combo svg { position: absolute; right: 2px; top: 7px; pointer-events: none; }
.c-font { width: 135px; }
.c-size { width: 43px; margin-left: -1px; font-size: 12px; }
.c-num { width: 120px; }
.grow { margin-left: 2px; }
.collapse { position: absolute; right: 7px; bottom: 3px; }

/* formula bar */
.formula { display: flex; align-items: center; height: 41px; padding: 0 4px; font-size: 12px; }
.formula label, .fx { display: flex; align-items: center; height: 25px; background: #fff; border: 1px solid #cfcfcf; }
.formula input { flex: 1; border: 0; background: none; padding: 0 4px; height: 22px; }
.namebox { width: 93px; padding-right: 5px; font-size: 11px; }
.formula .dots { margin: 0 12px 0 13px; }
.fx { width: 100px; justify-content: space-around; padding: 0 3px; margin-right: 2px; color: #555; }
.fx i { font: italic bold 16px/20px "Liberation Serif", serif; }
.fx small { font-size: 12px; }
.finput { flex: 1; padding: 0 3px 0 5px; font-size: 13px; font-family: "Noto Sans CJK SC", sans-serif; font-weight: 300; }

/* worksheet */
.sheet { flex: 1; min-height: 0; display: flex; }
.viewport { position: relative; flex: 1; min-width: 0; overflow: hidden; background: #a0a0a0; }
.grid { table-layout: fixed; width: 1422px; border-spacing: 0; color: #000; font: 300 24px/26px "Noto Sans CJK SC", sans-serif; }
.c-head { width: 45px; }
.c-a { width: 104px; }
.c-std { width: 105px; }
.c-d { width: 158px; }
.c-f { width: 275px; }
.grid th, .grid td { padding: 0; height: 33px; text-align: center; font-weight: 300; white-space: nowrap; }
.grid .short th, .grid .short td { height: 32px; }
.grid .low th, .grid .low td { height: 30px; }
.grid th { background: #e6e6e6; border-right: 1px solid #bdbdbd; border-bottom: 1px solid #c6c6c6; font-size: 22px; }
.grid thead th { height: 31px; padding-top: 2px; border-bottom: 0; }
.grid thead .sel { border-bottom: 2px solid #1d6b4b; }
.grid .sel { background: #d2d2d2; color: #1e6146; }
.corner svg { display: block; margin: 0 2px 0 auto; }
.grid .title { background: #fff; color: #f00; border-left: 1px solid #2020c0; border-right: 2px solid #1010c8; }
.title small { font-family: "Liberation Serif", serif; font-size: 20px; }
.grid .a { background: #fff; border-left: 1px solid #2020c0; border-bottom: 1px solid #d4d4d4; font-size: 22px; }
.grid .left { text-align: left; padding-left: 5px; font-size: 24px; }
.d {
  --dash: #7030a0 0 8px, #b79ad0 8px 10px, #7030a0 10px 13px, #b79ad0 13px 15px;
  background-color: #fff;
  background-image:
    repeating-linear-gradient(90deg, var(--dash)),
    repeating-linear-gradient(var(--dash)),
    linear-gradient(rgba(112, 48, 160, .35) 0 100%),
    linear-gradient(rgba(112, 48, 160, .35) 0 100%);
  background-size: 100% 1px, 1px 100%, 100% 2px, 2px 100%;
  background-repeat: no-repeat;
}
.grid .last { border-right: 2px solid #1010c8; }
.heads .d { background-color: #70ad47; }
.grid .lv { background-color: #a5a5a5; font-style: italic; font-size: 22px; }
.grid .star { background-color: #ed7d31; text-align: left; padding: 2px 0 0 8px; }
.grid .num { background-color: #5b9bd5; font-size: 22px; }
.grid .ppl { background-color: #00b050; text-align: left; padding: 3px 0 0 7px; }
.star svg, .ppl svg { display: block; position: relative; z-index: 2; }
.num span { position: relative; z-index: 2; }
.grid .note { position: relative; background: #fff; border: 1px solid #217346; border-width: 1px 2px 2px 1px; }
.note::after { content: ""; position: absolute; right: -3px; bottom: -3px; width: 5px; height: 5px; background: #217346; border: solid #fff; border-width: 1px 0 0 1px; }
.void { background: #a0a0a0; }
.page-mark { position: absolute; z-index: 1; left: 337px; top: 141px; display: flex; gap: 27px; font: 84px/120px "Noto Sans CJK SC", sans-serif; color: rgba(145, 145, 140, .8); }

.vscroll { display: flex; flex-direction: column; width: 18px; padding: 2px 3px 0 2px; }
.vscroll button, .hscroll button { background: #fff; border: 1px solid #b5b5b5; }
.vscroll button { height: 13px; }
.vscroll .thumb { flex: 85; background: #fff; border: 1px solid #b5b5b5; border-top: 0; }
.vscroll .track { flex: 15; background: #dadada; }

/* sheet tabs */
.sheetbar { display: flex; height: 21px; align-items: center; }
.navs { display: flex; gap: 17px; width: 75px; padding-left: 20px; }
.stab { align-self: flex-start; width: 60px; height: 19px; padding-bottom: 2px; background: #fff; border-bottom: 2px solid #217346; color: #217346; font-size: 12px; }
.add { margin-left: 24px; }
.sheetbar .dots { margin-left: auto; margin-right: 12px; }
.hscroll { display: flex; width: 38%; height: 14px; margin-right: 18px; }
.hscroll button { width: 14px; }
.hscroll .thumb { flex: 90; background: #fff; border: 1px solid #b5b5b5; border-left: 0; }
.hscroll .track { flex: 10; background: #dadada; }

/* status bar */
.status { position: relative; display: flex; align-items: center; height: 21px; padding: 0 7px; background: #f3f3f3; border-top: 1px solid #d4d4d4; border-bottom: 2px solid #222; }
.views { display: flex; align-self: stretch; margin-left: auto; }
.views button { width: 36px; }
.zoom { display: flex; align-items: center; gap: 4px; padding-left: 4px; }
.zoom button { width: 10px; }
.zoom input { appearance: none; width: 92px; height: 12px; margin: 0; background: linear-gradient(#aaa, #aaa) center / 100% 1px no-repeat; }
.zoom input::-webkit-slider-thumb { appearance: none; width: 4px; height: 11px; background: #555; }
.zoom .pc { width: 33px; text-align: right; font-size: 12px; }
.source { position: absolute; right: 16px; top: 0; font: 12px/16px "Open Sans", sans-serif; color: rgba(255, 255, 255, .7); text-shadow: 0 0 1px #aaa; }
```
